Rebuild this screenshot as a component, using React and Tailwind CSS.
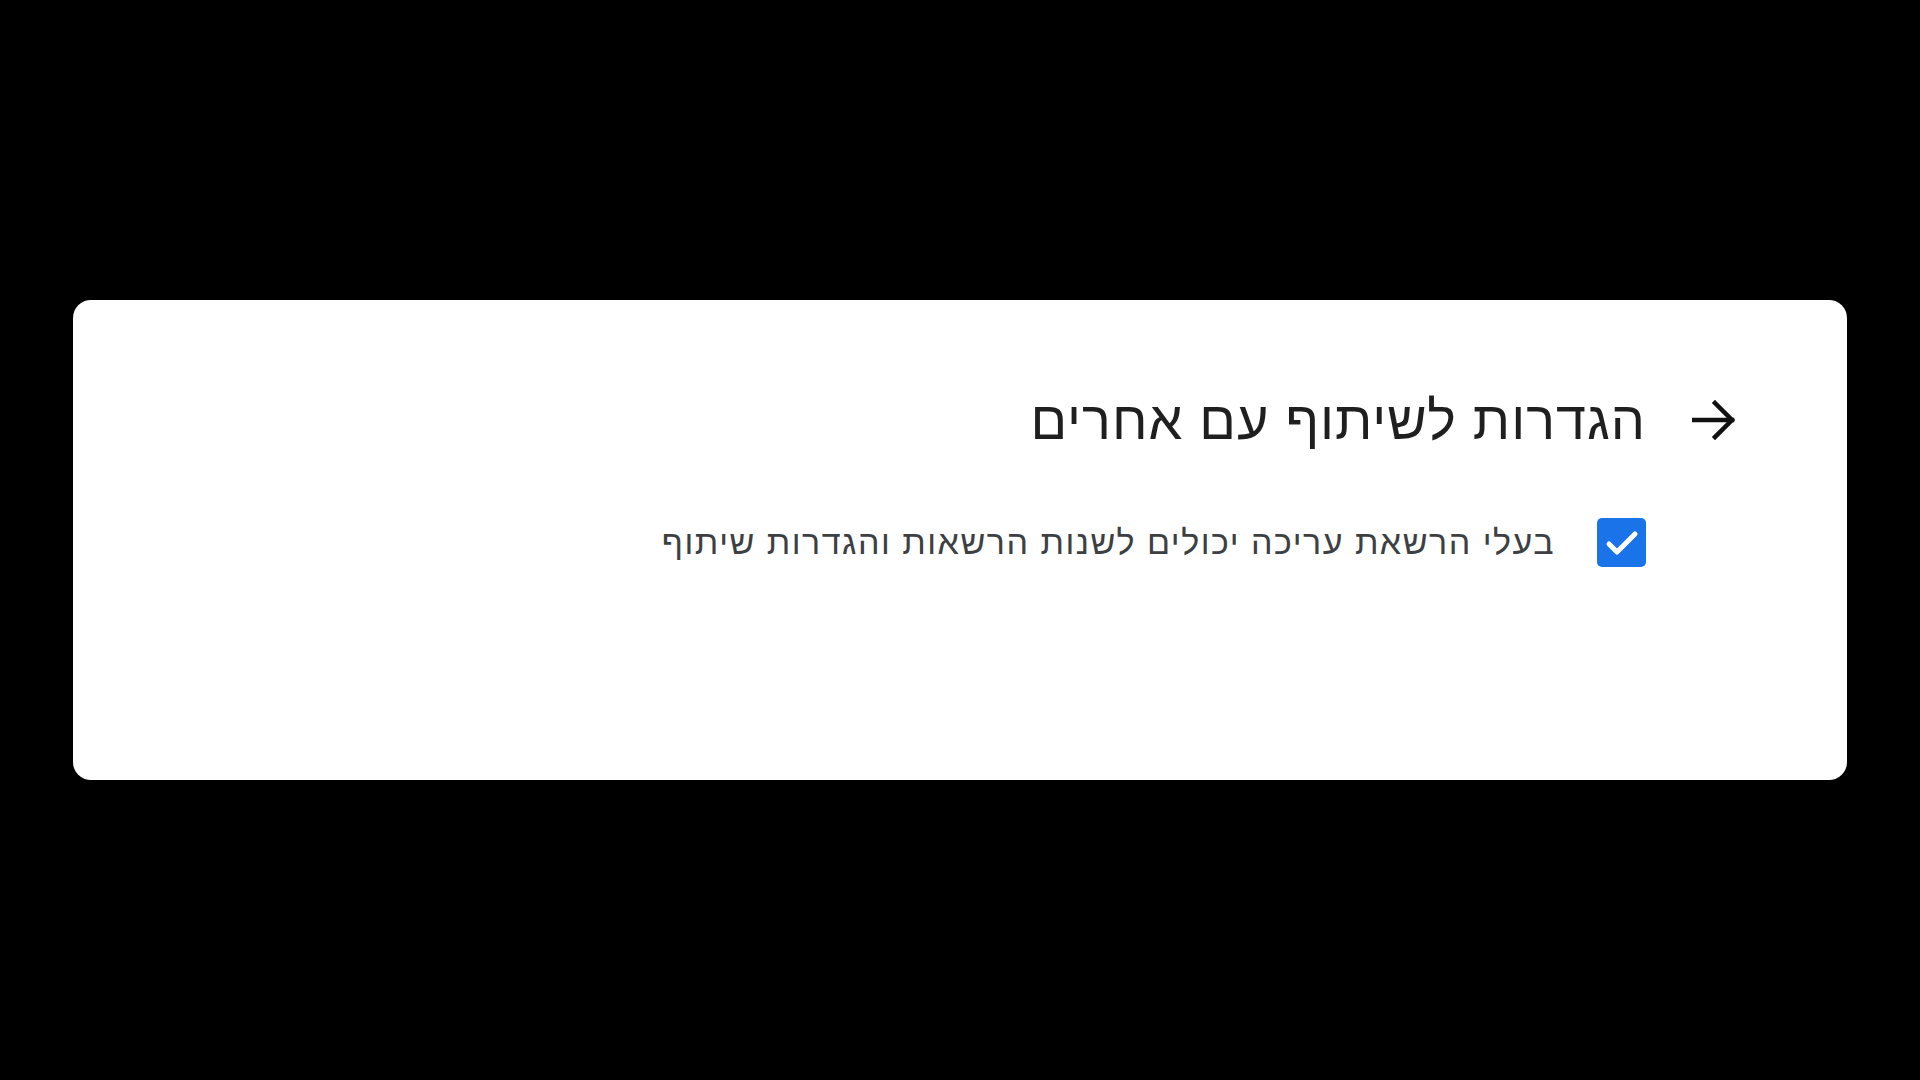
import React from 'react';

function BackArrow() {
  return (
    <svg width="44" height="42" viewBox="0 0 44 42" fill="none" stroke="#111" strokeWidth="4.5" strokeLinecap="square">
      <line x1="2" y1="21" x2="40" y2="21" />
      <polyline points="23,4 40,21 23,38" strokeLinejoin="miter" />
    </svg>
  );
}

function CheckBox({ checked, onChange }) {
  return (
    <button
      type="button"
      onClick={onChange}
      className={
        'w-[49px] h-[49px] rounded-[5px] flex items-center justify-center shrink-0 ' +
        (checked ? 'bg-[#1a73e8]' : 'bg-white border-4 border-gray-500')
      }
    >
      {checked && (
        <svg width="36" height="36" viewBox="0 0 36 36" fill="none" stroke="#fff" strokeWidth="5" strokeLinecap="round" strokeLinejoin="round">
          <polyline points="5,19 13,27 31,9" />
        </svg>
      )}
    </button>
  );
}

export default function App() {
  const [canChange, setCanChange] = React.useState(true);

  return (
    <div className="w-full h-screen bg-black flex items-center justify-center font-['Liberation_Sans',Arial,sans-serif]">
      <div dir="rtl" className="bg-white rounded-[18px] w-[1774px] h-[480px] pr-[111px] pt-[93px]">
        <div className="flex items-center gap-[46px]">
          <BackArrow />
          <h1 className="text-[54px] leading-none tracking-[1px] text-[#1f1f1f] font-normal">הגדרות לשיתוף עם אחרים</h1>
        </div>
        <div className="flex items-center gap-[42px] mt-[70px] mr-[90px]">
          <CheckBox checked={canChange} onChange={() => setCanChange(!canChange)} />
          <span className="text-[34px] tracking-[1.5px] text-[#3c4043]">בעלי הרשאת עריכה יכולים לשנות הרשאות והגדרות שיתוף</span>
        </div>
      </div>
    </div>
  );
}
